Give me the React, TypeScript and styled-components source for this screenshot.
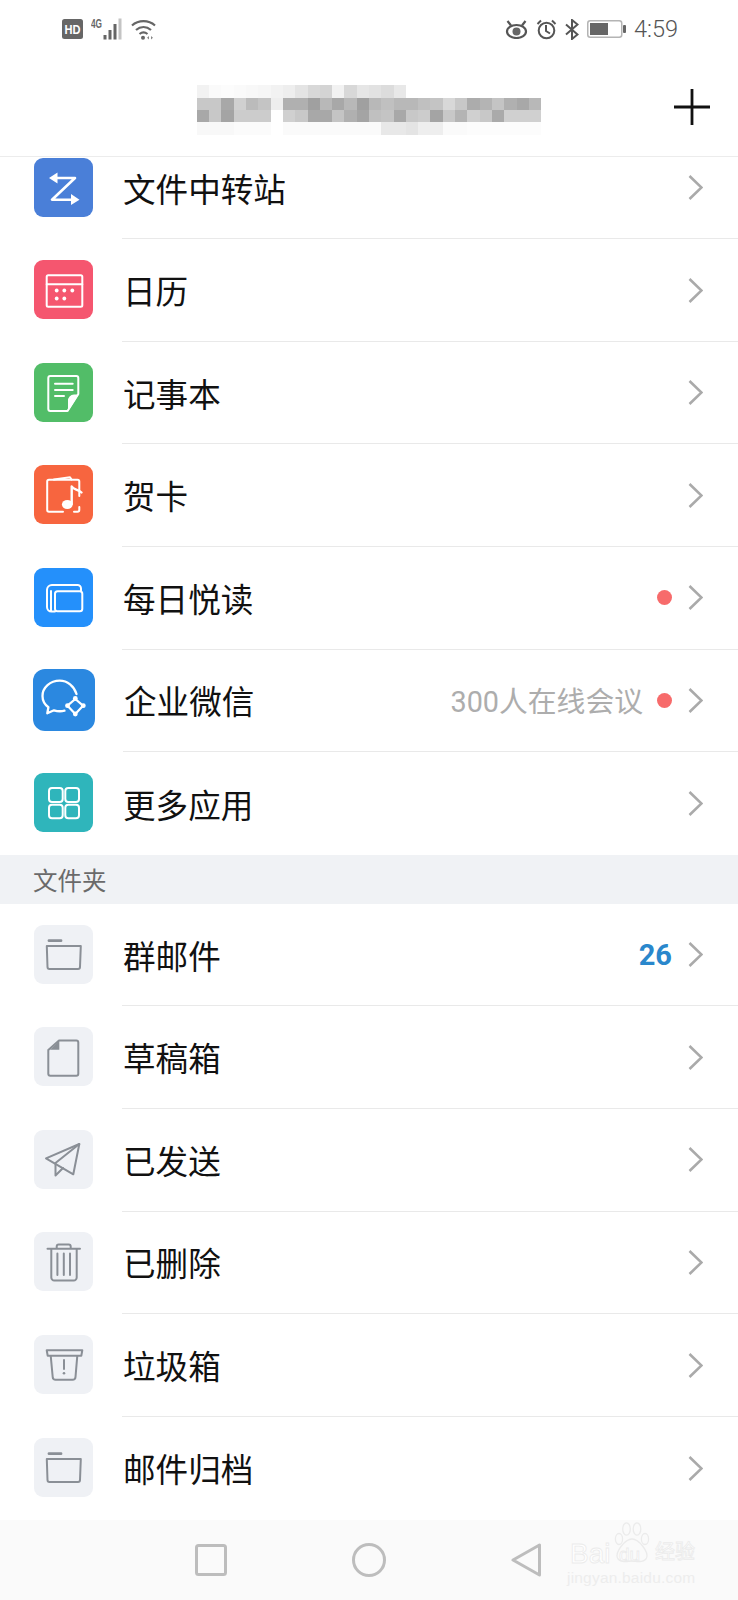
import React from "react";
import styled, { createGlobalStyle } from "styled-components";

const GlobalStyle = createGlobalStyle`
  html, body { margin: 0; padding: 0; background: #fff; }
  body { font-family: "Noto Sans CJK SC", "Noto Sans", sans-serif; }
`;

const Phone = styled.div`
  position: relative;
  width: 738px;
  height: 1600px;
  display: flex;
  flex-direction: column;
  overflow: hidden;
  background: #fff;
`;

const StatusBar = styled.div`
  height: 58px;
  flex: none;
  display: flex;
  align-items: center;
  justify-content: space-between;
  padding: 0 60px 0 62px;
`;

const StatusGroup = styled.div`
  display: flex;
  align-items: center;
  gap: 8px;
`;

const Clock = styled.span`
  font-family: Roboto, "Liberation Sans", sans-serif;
  font-weight: 300;
  font-size: 23.5px;
  line-height: 24px;
  color: #555;
`;

const Header = styled.header`
  height: 98px;
  flex: none;
  display: grid;
  grid-template-columns: 1fr auto 1fr;
  align-items: center;
  border-bottom: 1px solid #ececec;
  background: #fff;
  position: relative;
  z-index: 1;
`;

const Mosaic = styled.div`
  grid-column: 2;
  display: grid;
  grid-template-columns: repeat(28, 12.3px);
  grid-auto-rows: 12.3px;
  margin-top: 6px;
`;

const Tile = styled.i<{ $shade: string }>`
  display: block;
  background: #${(p) => p.$shade.repeat(3)};
`;

const AddButton = styled.div`
  grid-column: 3;
  justify-self: end;
  margin-right: 28px;
  display: flex;
`;

const Scroller = styled.div`
  flex: 1;
  overflow: hidden;
`;

const Content = styled.div`
  margin-top: -20.3px;
`;

const Row = styled.div`
  height: 102.6px;
  display: flex;
  align-items: center;
  padding-left: 34px;
`;

const IconTile = styled.div<{ $bg: string; $big?: boolean }>`
  width: ${(p) => (p.$big ? 62 : 59)}px;
  height: ${(p) => (p.$big ? 62 : 59)}px;
  margin: -2px ${(p) => (p.$big ? -1 : 0)}px 0;
  border-radius: ${(p) => (p.$big ? 12 : 9)}px;
  background: ${(p) => p.$bg};
  flex: none;
  display: flex;
`;

const RowBody = styled.div<{ $last?: boolean }>`
  flex: 1;
  align-self: stretch;
  margin-left: 29px;
  padding: 0 35px 0 1px;
  display: flex;
  align-items: center;
  box-sizing: border-box;
  border-bottom: ${(p) => (p.$last ? "none" : "1px solid #e9e9e9")};
`;

const RowLabel = styled.span`
  flex: 1;
  font-size: 32.6px;
  line-height: 40px;
  color: #111;
`;

const Hint = styled.span`
  font-family: Roboto, "Noto Sans CJK SC", sans-serif;
  font-size: 28.8px;
  line-height: 40px;
  color: #adadad;
  margin: 3px 14px 0 0;
`;

const Dot = styled.span`
  width: 15px;
  height: 15px;
  border-radius: 50%;
  background: #f76b6b;
  margin-right: 16px;
`;

const Count = styled.span`
  font-family: Roboto, "Liberation Sans", sans-serif;
  font-weight: 700;
  font-size: 29px;
  line-height: 40px;
  color: #2a87cc;
  margin-right: 16px;
`;

const SectionTitle = styled.div`
  height: 49px;
  display: flex;
  align-items: center;
  padding-left: 33px;
  background: #f0f2f5;
  font-size: 24.5px;
  color: #6a6a6a;
`;

const NavBar = styled.nav`
  height: 80.5px;
  flex: none;
  display: flex;
  align-items: center;
  gap: 125px;
  padding-left: 195px;
  background: #fafafa;
`;

const Watermark = styled.div`
  position: absolute;
  left: 566px;
  top: 1518px;
  width: 132px;
  height: 70px;
  pointer-events: none;
`;

const MarkWord = styled.span<{ $left: number; $top: number; $size: number }>`
  position: absolute;
  left: ${(p) => p.$left}px;
  top: ${(p) => p.$top}px;
  font-family: "Liberation Sans", "Noto Sans CJK SC", sans-serif;
  font-size: ${(p) => p.$size}px;
  line-height: 1;
  white-space: nowrap;
  color: #fff;
  -webkit-text-stroke: 0.8px #ebebeb;
`;

const MarkUrl = styled.div`
  position: absolute;
  left: 1px;
  top: 51px;
  font-family: "Liberation Sans", sans-serif;
  font-size: 15.5px;
  line-height: 18px;
  letter-spacing: 0.2px;
  white-space: nowrap;
  color: #ededed;
`;

const W = "#fff";
const G = "#8a8f96";

const Glyph = ({ size = 59, children }: { size?: number; children: React.ReactNode }) => (
  <svg width={size} height={size} viewBox={`0 0 ${size} ${size}`} fill="none" strokeLinecap="round" strokeLinejoin="round">
    {children}
  </svg>
);

const TransferIcon = () => (
  <Glyph>
    <path d="M20 20H41L18 41.7H39" stroke={W} strokeWidth="2.6" />
    <path d="M15 20L23.5 14.5V25.5Z M45.5 41.7L37 36V47Z" fill={W} />
  </Glyph>
);

const CalendarIcon = () => (
  <Glyph>
    <rect x="12.7" y="15.3" width="35.6" height="31.4" rx="1.5" stroke={W} strokeWidth="2" />
    <path d="M12.7 24.3H48.3" stroke={W} strokeWidth="2" />
    <g fill={W}>
      <circle cx="22.7" cy="30.5" r="1.9" />
      <circle cx="30.3" cy="30.5" r="1.9" />
      <circle cx="38.3" cy="30.5" r="1.9" />
      <circle cx="22.7" cy="38.5" r="1.9" />
      <circle cx="30.3" cy="38.5" r="1.9" />
    </g>
  </Glyph>
);

const NoteIcon = () => (
  <Glyph>
    <path d="M44.3 31V15a2 2 0 0 0-2-2H16.3a2 2 0 0 0-2 2V46a2 2 0 0 0 2 2H33.5Z" stroke={W} strokeWidth="2" />
    <path d="M44.8 31.5L34 48.5V38a6 6 0 0 1 6-6.5Z" fill={W} />
    <path d="M21 20.7H38.7M21 27H38.7M21 33H30" stroke={W} strokeWidth="2" />
  </Glyph>
);

const CardIcon = () => (
  <Glyph>
    <path d="M45.3 31V16.5a1.8 1.8 0 0 0-1.8-1.8H15a1.8 1.8 0 0 0-1.8 1.8V45a1.8 1.8 0 0 0 1.8 1.8H29M40 46.8h3.5a1.8 1.8 0 0 0 1.8-1.8V42" stroke={W} strokeWidth="2" />
    <path d="M20 14.5L36 12.3L37.5 14.5" stroke={W} strokeWidth="2" />
    <ellipse cx="33.3" cy="39.5" rx="5.4" ry="4.6" fill={W} />
    <path d="M37.7 39V21.5C39.5 25 44 24 47.5 27.5" stroke={W} strokeWidth="2.4" />
  </Glyph>
);

const DailyIcon = () => (
  <Glyph>
    <rect x="21" y="23.3" width="27.3" height="20" rx="2.5" stroke={W} strokeWidth="2" />
    <path d="M21 43.5H17.5a4.5 4.5 0 0 1-4.5-4.5V22a5 5 0 0 1 5-5H43.5a3.5 3.5 0 0 1 3.5 3.5V23M17 23V43" stroke={W} strokeWidth="2" />
  </Glyph>
);

const WeComIcon = () => (
  <Glyph size={62}>
    <path d="M43.5 25C41 17 34.5 11.7 26.7 11.7C17.2 11.7 9.5 18.6 9.5 27C9.5 31.6 11.8 35.6 15.4 38.2L14.3 44.3L21 41.3C24.5 42.4 28.2 42.5 31.5 41.7" stroke={W} strokeWidth="2.3" />
    <path d="M42.3 30L50 36.7L42.3 45L34.5 36.7Z" stroke={W} strokeWidth="2.2" />
    <g fill={W}>
      <circle cx="42.3" cy="29.5" r="2.4" />
      <circle cx="50.3" cy="36.7" r="2.4" />
      <circle cx="42.3" cy="45" r="2.4" />
      <circle cx="34.5" cy="36.7" r="2.4" />
    </g>
  </Glyph>
);

const AppsIcon = () => (
  <Glyph>
    <g stroke={W} strokeWidth="2">
      <rect x="15" y="15" width="13.7" height="14" rx="3" />
      <rect x="31.3" y="15" width="13.7" height="14" rx="3" />
      <rect x="15" y="31.7" width="13.7" height="13.6" rx="3" />
      <rect x="31.3" y="31.7" width="13.7" height="13.6" rx="3" />
    </g>
  </Glyph>
);

const FolderIcon = () => (
  <Glyph>
    <path d="M15 15.7H27" stroke={G} strokeWidth="2.8" />
    <path d="M12.8 21H46.8L46 42a2 2 0 0 1-2 2H15.5a2 2 0 0 1-2-2Z" stroke={G} strokeWidth="2" />
  </Glyph>
);

const DraftIcon = () => (
  <Glyph>
    <path d="M25 13.5H42.3a2 2 0 0 1 2 2V46.7a2 2 0 0 1-2 2H16.3a2 2 0 0 1-2-2V23Z" stroke={G} strokeWidth="2" />
    <path d="M16 22.7H25.3V14Z" fill={G} />
  </Glyph>
);

const SendIcon = () => (
  <Glyph>
    <path d="M45.3 14L12 28.3L39.3 44.3Z" stroke={G} strokeWidth="2" />
    <path d="M45.3 14L21.5 33V45.5L29 38" stroke={G} strokeWidth="2" />
  </Glyph>
);

const TrashIcon = () => (
  <Glyph>
    <path d="M13.5 16.7H46M17.3 16.7V45.5a3 3 0 0 0 3 3H39.7a3 3 0 0 0 3-3V16.7M22.7 16.5V14.5a2 2 0 0 1 2-2H34.7a2 2 0 0 1 2 2V16.5M23.4 21.5V43M29.8 21.5V43M36 21.5V43" stroke={G} strokeWidth="2" />
  </Glyph>
);

const SpamIcon = () => (
  <Glyph>
    <path d="M12.7 15.3H48.3L47.3 20.7H13.7ZM16.7 20.7L18.7 42a3 3 0 0 0 3 2.8H38.5a3 3 0 0 0 3-2.8L43.3 20.7" stroke={G} strokeWidth="2" />
    <path d="M30 25V34" stroke={G} strokeWidth="2" />
    <circle cx="30" cy="38.2" r="1.3" fill={G} />
  </Glyph>
);

const Chevron = () => (
  <svg width="15" height="25" viewBox="0 0 15 25" fill="none">
    <path d="M1.5 1L13.5 12.5L1.5 24" stroke="#aaa" strokeWidth="2.6" />
  </svg>
);

const PlusIcon = () => (
  <svg width="36" height="36" viewBox="0 0 36 36">
    <path d="M0 18H36M18 0V36" stroke="#111" strokeWidth="2.8" />
  </svg>
);

const HdIcon = () => (
  <svg width="21" height="20" viewBox="0 0 21 20">
    <rect width="21" height="20" rx="2.5" fill="#666" />
    <text x="10.5" y="15" textAnchor="middle" fontFamily="Liberation Sans, sans-serif" fontWeight="700" fontSize="13" fill="#fff" textLength="16" lengthAdjust="spacingAndGlyphs">HD</text>
  </svg>
);

const SignalIcon = () => (
  <svg width="32" height="22" viewBox="0 0 32 22">
    <text x="0" y="10" fontFamily="Liberation Sans, sans-serif" fontWeight="700" fontSize="12" fill="#666" textLength="11" lengthAdjust="spacingAndGlyphs">4G</text>
    <g fill="#666">
      <rect x="12.5" y="17" width="3" height="4.5" />
      <rect x="17.5" y="12" width="3" height="9.5" />
      <rect x="22.5" y="6" width="3" height="15.5" />
    </g>
    <rect x="27.5" y="0.5" width="3" height="21" fill="#c4c4c4" />
  </svg>
);

const WifiIcon = () => (
  <svg width="25" height="21" viewBox="0 0 25 21" fill="none">
    <path d="M1 6.5C7.5 0.7 17.5 0.7 24 6.5M5 11C9.5 7 15.5 7 20 11M8.5 15C11 13 14 13 16.5 15" stroke="#666" strokeWidth="2.2" />
    <circle cx="12" cy="18.7" r="2" fill="#666" />
    <path d="M18 17V20.5L16 18.7ZM20 17L22 18.7L20 20.5Z" fill="#888" />
  </svg>
);

const EyeIcon = () => (
  <svg width="23" height="19" viewBox="0 0 23 19" fill="none" stroke="#555">
    <ellipse cx="11.5" cy="11.5" rx="9.5" ry="6.5" strokeWidth="2.2" />
    <circle cx="11.5" cy="11.5" r="4" fill="#666" strokeWidth="0" />
    <path d="M2.5 1L6 5.5M20.5 1L17 5.5" strokeWidth="2.2" />
  </svg>
);

const AlarmIcon = () => (
  <svg width="21" height="21" viewBox="0 0 21 21" fill="none" stroke="#555" strokeWidth="2">
    <circle cx="10.5" cy="11.5" r="7.8" />
    <path d="M10 6V12L14 14.5M1.5 5L5 1.5M19.5 5L16 1.5" />
  </svg>
);

const BluetoothIcon = () => (
  <svg width="14" height="21" viewBox="0 0 14 21" fill="none" stroke="#555" strokeWidth="2">
    <path d="M1 5.5L12.5 15.5L7 20V1L12.5 5.5L1 15.5" />
  </svg>
);

const BatteryIcon = () => (
  <svg width="39" height="18" viewBox="0 0 39 18">
    <rect x="0.75" y="0.75" width="34" height="16.5" rx="2.5" fill="none" stroke="#b4b4b4" strokeWidth="1.5" />
    <rect x="3" y="3" width="18" height="12" fill="#666" />
    <rect x="36" y="5" width="3" height="8" rx="1" fill="#666" />
  </svg>
);

const PawIcon = () => (
  <svg style={{ position: "absolute", left: 47, top: 4 }} width="38" height="42" viewBox="0 0 38 42" fill="none" stroke="#ebebeb" strokeWidth="1.3">
    <ellipse cx="6" cy="17" rx="3.6" ry="5.5" />
    <ellipse cx="13.5" cy="7" rx="3.8" ry="6.2" />
    <ellipse cx="24" cy="7" rx="3.8" ry="6.2" />
    <ellipse cx="32" cy="17" rx="3.6" ry="5.5" />
    <path d="M19 17C12 17 2 30 4.5 36C7 41.5 15 39 19 39C23 39 31 41.5 33.5 36C36 30 26 17 19 17Z" />
  </svg>
);

// blurred-out account name, one row of greys per line of the mosaic
const MOSAIC_ROWS = [
  "f2 fa fc fa f8 f6 f2 ee e4 d8 d4 f2 d8 e6 e2 dc e8 ff ff ff ff ff ff ff ff ff ff ff",
  "c8 c8 a8 d0 bb c4 ee b0 b0 a0 b8 a8 b8 a0 b8 c0 b8 b8 c0 c4 d8 c8 ac b4 c4 b0 a8 b8",
  "a8 c8 a4 cc cc cc ff d0 c8 a8 a8 c4 b0 a4 c0 c4 a8 c8 cc a4 c8 b4 d0 c8 aa d0 d0 d0",
  "f8 f8 f8 fb fb fb ff fa fa fa fa fa fa fa fa e8 e8 e4 ee ee fa fa fc fc fc fc fc fc",
];

type Item = {
  label: string;
  bg: string;
  icon: React.ReactNode;
  big?: boolean;
  hint?: string;
  dot?: boolean;
  count?: number;
};

const TILE_GREY = "#eff1f5";

const APP_ITEMS: Item[] = [
  { label: "文件中转站", bg: "#4a7fd8", icon: <TransferIcon /> },
  { label: "日历", bg: "#f5566f", icon: <CalendarIcon /> },
  { label: "记事本", bg: "#52bd68", icon: <NoteIcon /> },
  { label: "贺卡", bg: "#f7653f", icon: <CardIcon /> },
  { label: "每日悦读", bg: "#2490fb", icon: <DailyIcon />, dot: true },
  { label: "企业微信", bg: "#2b88e0", icon: <WeComIcon />, big: true, hint: "300人在线会议", dot: true },
  { label: "更多应用", bg: "#2fb5bb", icon: <AppsIcon /> },
];

const FOLDER_ITEMS: Item[] = [
  { label: "群邮件", bg: TILE_GREY, icon: <FolderIcon />, count: 26 },
  { label: "草稿箱", bg: TILE_GREY, icon: <DraftIcon /> },
  { label: "已发送", bg: TILE_GREY, icon: <SendIcon /> },
  { label: "已删除", bg: TILE_GREY, icon: <TrashIcon /> },
  { label: "垃圾箱", bg: TILE_GREY, icon: <SpamIcon /> },
  { label: "邮件归档", bg: TILE_GREY, icon: <FolderIcon /> },
];

function MailRow({ item, last }: { item: Item; last?: boolean }) {
  return (
    <Row>
      <IconTile $bg={item.bg} $big={item.big}>{item.icon}</IconTile>
      <RowBody $last={last}>
        <RowLabel>{item.label}</RowLabel>
        {item.hint && <Hint>{item.hint}</Hint>}
        {item.dot && <Dot />}
        {item.count && <Count>{item.count}</Count>}
        <Chevron />
      </RowBody>
    </Row>
  );
}

export default function App() {
  return (
    <Phone>
      <GlobalStyle />
      <StatusBar>
        <StatusGroup>
          <HdIcon />
          <SignalIcon />
          <WifiIcon />
        </StatusGroup>
        <StatusGroup>
          <EyeIcon />
          <AlarmIcon />
          <BluetoothIcon />
          <BatteryIcon />
          <Clock>4:59</Clock>
        </StatusGroup>
      </StatusBar>
      <Header>
        <Mosaic>
          {MOSAIC_ROWS.flatMap((row, r) =>
            row.split(" ").map((shade, c) => <Tile key={`${r}-${c}`} $shade={shade} />)
          )}
        </Mosaic>
        <AddButton>
          <PlusIcon />
        </AddButton>
      </Header>
      <Scroller>
        <Content>
          {APP_ITEMS.map((item, i) => (
            <MailRow key={item.label} item={item} last={i === APP_ITEMS.length - 1} />
          ))}
          <SectionTitle>文件夹</SectionTitle>
          {FOLDER_ITEMS.map((item, i) => (
            <MailRow key={item.label} item={item} last={i === FOLDER_ITEMS.length - 1} />
          ))}
        </Content>
      </Scroller>
      <NavBar>
        <svg width="32" height="32" viewBox="0 0 32 32" fill="none">
          <rect x="1.5" y="1.5" width="29" height="29" rx="2" stroke="#bdbdbd" strokeWidth="3" />
        </svg>
        <svg width="34" height="34" viewBox="0 0 34 34" fill="none">
          <circle cx="17" cy="17" r="15.5" stroke="#bdbdbd" strokeWidth="3" />
        </svg>
        <svg width="30" height="34" viewBox="0 0 30 34" fill="none">
          <path d="M28.5 2V32L2 17Z" stroke="#bdbdbd" strokeWidth="3" strokeLinejoin="round" />
        </svg>
      </NavBar>
      <Watermark>
        <PawIcon />
        <MarkWord $left={4} $top={22} $size={28}>Bai</MarkWord>
        <MarkWord $left={53} $top={27} $size={19}>du</MarkWord>
        <MarkWord $left={89} $top={24} $size={20}>经验</MarkWord>
        <MarkUrl>jingyan.baidu.com</MarkUrl>
      </Watermark>
    </Phone>
  );
}
